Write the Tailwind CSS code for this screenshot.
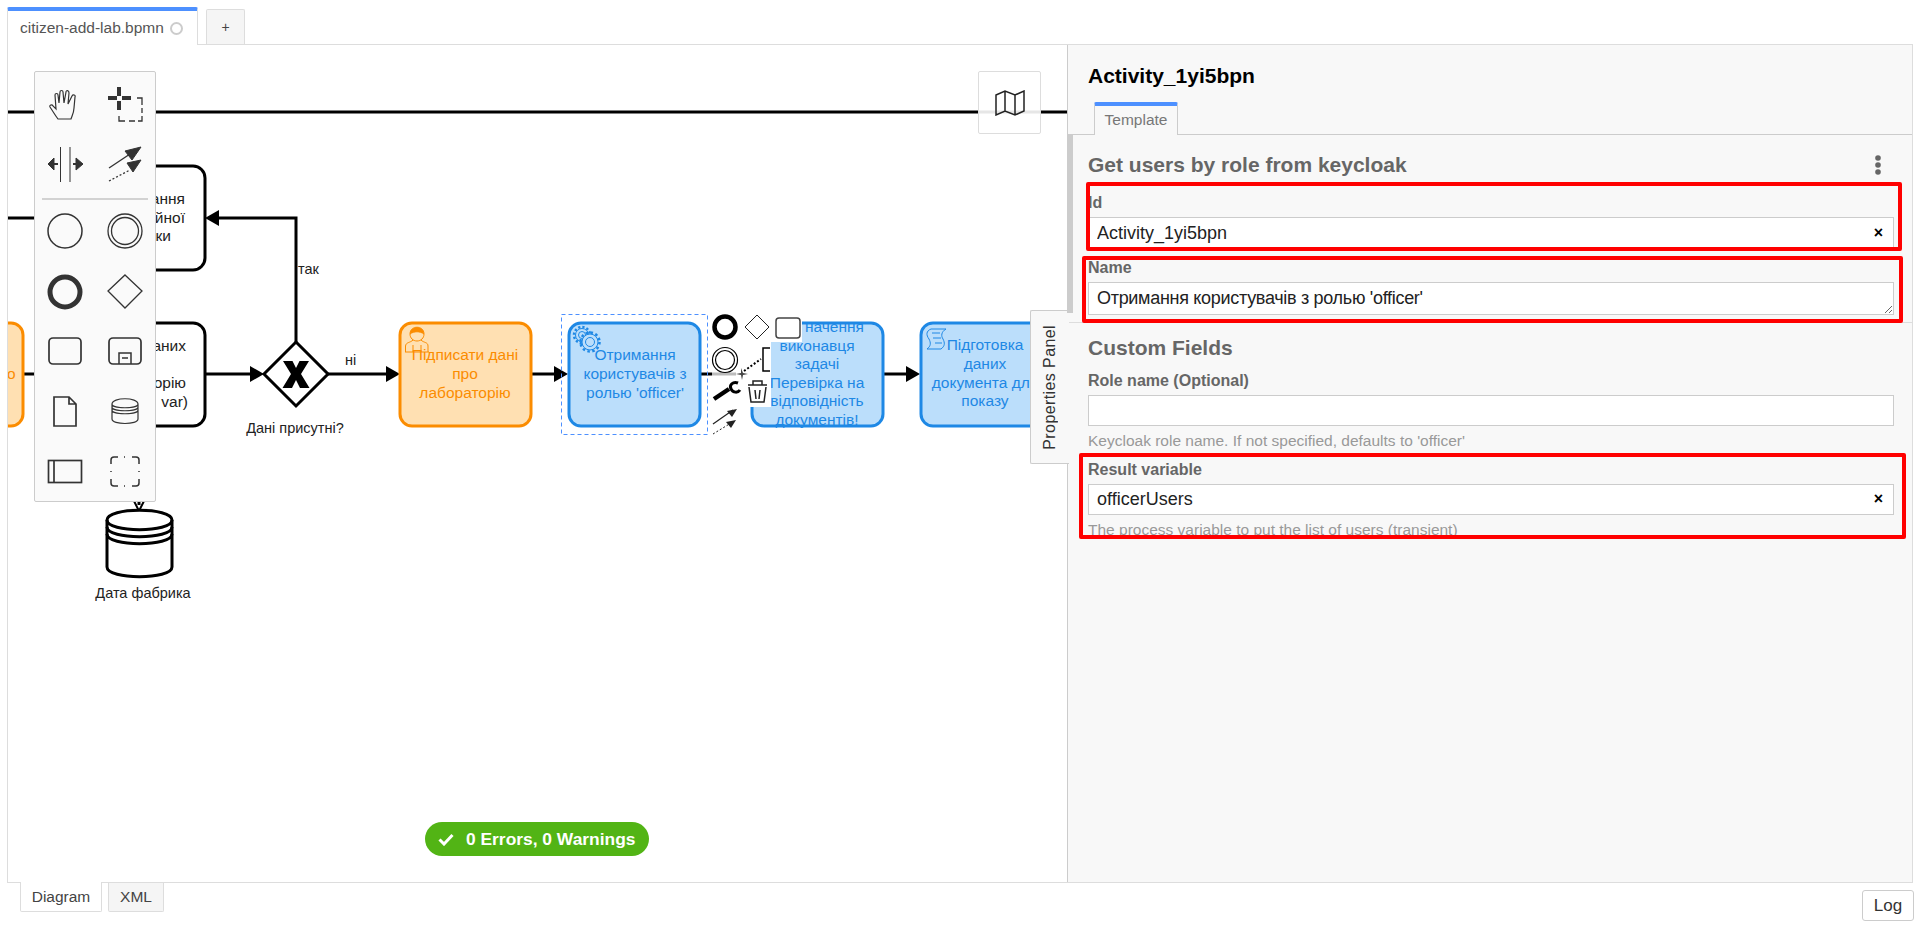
<!DOCTYPE html>
<html lang="en">
<head>
    <meta charset="UTF-8">
    <title>citizen-add-lab.bpmn</title>
    <script src="https://cdn.jsdelivr.net/npm/@tailwindcss/browser@4"></script>
</head>
<body class="h-screen flex flex-col bg-white overflow-hidden font-['Liberation_Sans',sans-serif] text-[15.5px] text-[#444]">
    <!-- File tabs -->
    <div class="h-[44px] shrink-0 flex items-end pl-[7px] gap-[8px]">
        <div class="relative z-10 -mb-px h-[38px] w-[191px] bg-white border-x border-[#ddd] border-t-4 border-t-[#4d90ff] rounded-t-[2px] flex items-center pl-[12px] gap-[6px] text-[#555]">
            <span>citizen-add-lab.bpmn</span>
            <span class="w-[13px] h-[13px] rounded-full border-2 border-[#ccc]"></span>
        </div>
        <div class="h-[35px] w-[39px] bg-[#f5f5f5] border-x border-t border-[#ddd] rounded-t-[2px] flex items-center justify-center text-[14px]">+</div>
    </div>

    <!-- Editor frame -->
    <div class="flex-1 min-h-0 ml-[7px] mr-[6px] border border-[#ddd] flex">
        <div class="relative flex-1 overflow-hidden bg-white">
            <svg class="absolute inset-0" width="1059" height="837" viewBox="8 45 1059 837" fill="none">
                <!-- Flows -->
                <g stroke="#000" stroke-width="3">
                    <path d="M8 112H1067"/>
                    <path d="M8 218H100"/>
                    <path d="M296 342V218H218"/>
                    <path d="M23 374H40"/>
                    <path d="M205 374H252"/>
                    <path d="M328 374H388"/>
                    <path d="M531 374H556"/>
                    <path d="M883 374H908"/>
                    <path d="M700 374H712"/>
                    <path d="M139 495V505"/>
                </g>
                <g fill="#000">
                    <path d="M205 218L219 210V226Z"/>
                    <path d="M264 374L250 366V382Z"/>
                    <path d="M400 374L386 366V382Z"/>
                    <path d="M568 374L554 366V382Z"/>
                    <path d="M920 374L906 366V382Z"/>
                </g>
                <path d="M134 501L139 511L144 501" stroke="#000" stroke-width="2"/>

                <!-- Tasks hidden behind the palette -->
                <rect x="70" y="166" width="135" height="104" rx="12" fill="#fff" stroke="#000" stroke-width="3"/>
                <rect x="70" y="323" width="135" height="103" rx="12" fill="#fff" stroke="#000" stroke-width="3"/>
                <g font-size="15.500" fill="#222" text-anchor="end">
                    <text x="185" y="204">ання</text>
                    <text x="185" y="223">йної</text>
                    <text x="171" y="241">ки</text>
                    <text x="186" y="351">аних</text>
                    <text x="186" y="388">орію</text>
                    <text x="188" y="407">var)</text>
                </g>
                <rect x="-40" y="323" width="63" height="103" rx="12" fill="#ffe0b2" stroke="#fb8c00" stroke-width="3"/>
                <text x="7" y="379" font-size="15.500" fill="#fb8c00">о</text>

                <!-- Gateway -->
                <path d="M296 342L328 374L296 406L264 374Z" fill="#fff" stroke="#000" stroke-width="3"/>
                <path d="M283 361H292.500L296 368L299.500 361H309L301 374L309.500 388H300L296 380L292 388H282.500L291 374Z" fill="#000"/>
                <g font-size="14.500" fill="#222">
                    <text x="295" y="433" text-anchor="middle">Дані присутні?</text>
                    <text x="298" y="274">так</text>
                    <text x="345" y="365">ні</text>
                    <text x="143" y="598" text-anchor="middle">Дата фабрика</text>
                </g>

                <!-- Data store -->
                <path d="M107 520C107 507 172 507 172 520V567C172 580 107 580 107 567Z" fill="#fff" stroke="#000" stroke-width="3"/>
                <path d="M107 520C107 533 172 533 172 520M107 527C107 540 172 540 172 527M107 534C107 547 172 547 172 534" stroke="#000" stroke-width="3"/>

                <!-- Orange user task -->
                <rect x="400" y="323" width="131" height="103" rx="12" fill="#ffe0b2" stroke="#fb8c00" stroke-width="3"/>
                <g stroke="#fb8c00" stroke-width="1">
                    <path d="M410 334C410 325 424 325 424 334C420 331 414 331 410 334Z" fill="#fb8c00"/>
                    <path d="M410 334C410 338 413 341 417 341C421 341 424 338 424 334"/>
                    <path d="M413 340C410 343 406 342 405.500 346V352M421 340C424 343 428 342 428 346V352M405 352H429M413 345V352M421 345V352"/>
                </g>
                <g font-size="15.500" fill="#fb8c00" text-anchor="middle">
                    <text x="465" y="360">Підписати дані</text>
                    <text x="465" y="379">про</text>
                    <text x="465" y="398">лабораторію</text>
                </g>

                <!-- Blue service task -->
                <rect x="569" y="323" width="131" height="103" rx="12" fill="#bbdefb" stroke="#1e88e5" stroke-width="3"/>
                <g stroke="#1e88e5">
                    <circle cx="582" cy="335" r="6.500"/>
                    <circle cx="582" cy="335" r="8" stroke-width="2.500" stroke-dasharray="2.200 2"/>
                    <circle cx="582" cy="335" r="3.500"/>
                    <circle cx="590" cy="342" r="8" fill="#bbdefb"/>
                    <circle cx="590" cy="342" r="9.500" stroke-width="2.500" stroke-dasharray="2.500 2.500"/>
                    <circle cx="590" cy="342" r="4.500"/>
                </g>
                <g font-size="15.500" fill="#1e88e5" text-anchor="middle">
                    <text x="635" y="360">Отримання</text>
                    <text x="635" y="379">користувачів з</text>
                    <text x="635" y="398">ролью 'officer'</text>
                </g>
                <rect x="561.500" y="314.500" width="146" height="120" stroke="#4d90ff" stroke-dasharray="4 3"/>

                <!-- User task behind the context pad -->
                <rect x="752" y="323" width="131" height="103" rx="12" fill="#bbdefb" stroke="#1e88e5" stroke-width="3"/>
                <g font-size="15.500" fill="#1e88e5" text-anchor="middle">
                    <text x="864" y="332" text-anchor="end">начення</text>
                    <text x="817" y="351">виконавця</text>
                    <text x="817" y="369">задачі</text>
                    <text x="817" y="388">Перевірка на</text>
                    <text x="817" y="406">відповідність</text>
                    <text x="817" y="425">документів!</text>
                </g>

                <!-- Script task -->
                <rect x="921" y="323" width="130" height="103" rx="12" fill="#bbdefb" stroke="#1e88e5" stroke-width="3"/>
                <path d="M931 329H946C941 332 941 336 943 339C945 343 945 346 941 349H927C931 346 931 343 929 339C926 335 926 331 931 329ZM932 333H940M933 338H941M935 343H942" stroke="#1e88e5"/>
                <g font-size="15.500" fill="#1e88e5" text-anchor="middle">
                    <text x="985" y="350">Підготовка</text>
                    <text x="985" y="369">даних</text>
                    <text x="985" y="388">документа для</text>
                    <text x="985" y="406">показу</text>
                </g>

                <!-- Context pad -->
                <path d="M712 316H802V342H771V407H712Z" fill="#fff"/>
                <path d="M712 374H736" stroke="#bbb" stroke-width="3"/>
                <circle cx="725" cy="327" r="10.500" stroke="#000" stroke-width="4.500"/>
                <path d="M757 315L769 327L757 339L745 327Z" stroke="#222"/>
                <rect x="776" y="318" width="24" height="20" rx="3" stroke="#444" stroke-width="1.500"/>
                <circle cx="725" cy="360" r="12.500" stroke="#000" stroke-width="1.200"/>
                <circle cx="725" cy="360" r="9.500" stroke="#000" stroke-width="1.200"/>
                <path d="M770 348H763V371H770" stroke="#000" stroke-width="1.500"/>
                <path d="M744 371L761 359" stroke="#000" stroke-width="2" stroke-dasharray="2 2"/>
                <path d="M736 374L741 375L742 380L743 375L748 374L743 373L741 368L741 373Z" fill="#444"/>
                <path d="M714 399L729 389" stroke="#000" stroke-width="4.500"/>
                <path d="M738 383C733 381 729 385 731 389C733 393 738 393 740 390" stroke="#000" stroke-width="3"/>
                <path d="M748 385H767M753 385V381H762V385M749 387L751 402H764L766 387M755 390L756 399M760 390L759 399" stroke="#222" stroke-width="1.500"/>
                <path d="M713 424L733 410" stroke="#222" stroke-width="1.200"/>
                <path d="M737 409L727 411L732 417Z" fill="#222"/>
                <path d="M713 434L731 423" stroke="#222" stroke-dasharray="2 2"/>
                <path d="M736 420L726 422L731 428Z" fill="#222"/>
            </svg>

            <!-- Tool palette -->
            <div class="absolute left-[26px] top-[26px] w-[122px] h-[431px] bg-[#fafafa] border border-[#ccc] rounded-[2px]">
                <svg width="120" height="429" viewBox="35 72 120 429" fill="none" stroke="#333">
                    <path d="M58 119C55 115 54 113 50 107C49 105 52 104 53 106L56 109L55 95C55 93 58 93 58 95L59 103L60 92C60 90 63 90 63 92L64 103L66 92C66 90 69 90 69 93L68 104L72 96C73 94 76 95 75 97L74 108C74 112 72 116 71 119Z" stroke-width="1.200"/>
                    <path d="M108 98H117M122 98H131M119 87V96M119 101V110" stroke-width="4"/>
                    <path d="M137 98H142V105M142 108V113M142 116V121H138M135 121H129M125 121H119V116" stroke-width="1.300"/>
                    <path d="M60.500 147V182M70 147V182"/>
                    <path d="M48 164L54 158V170ZM83 164L76 158V170Z" fill="#333"/>
                    <path d="M54 164H58M73 164H78" stroke-width="2"/>
                    <path d="M109 168L130 154" stroke-width="1.300"/>
                    <path d="M141 147L125 151L132 160Z" fill="#333"/>
                    <path d="M109 181L130 170" stroke-dasharray="2 2" stroke-width="1.300"/>
                    <path d="M141 160L127 163L133 172Z" fill="#333"/>
                    <path d="M42 199H148" stroke="#aaa"/>
                    <circle cx="65" cy="231" r="17" stroke-width="1.500"/>
                    <circle cx="125" cy="231" r="17" stroke-width="1.300"/>
                    <circle cx="125" cy="231" r="13.500" stroke-width="1.300"/>
                    <circle cx="65" cy="292" r="15" stroke-width="5"/>
                    <path d="M125 275L142 291L125 308L108 291Z" stroke-width="1.300"/>
                    <rect x="49" y="338" width="32" height="26" rx="4" stroke-width="1.700"/>
                    <rect x="109" y="338" width="32" height="26" rx="4" stroke-width="1.700"/>
                    <path d="M119 364V353H131V364M122 358H128" stroke-width="1.500"/>
                    <path d="M54 397H69L76 404V426H54ZM69 397V404H76" stroke-width="1.700"/>
                    <path d="M112 404C112 397 138 397 138 404V419C138 425 112 425 112 419ZM112 404C112 409 138 409 138 404M112 407C112 412 138 412 138 407M112 410C112 415 138 415 138 410" stroke-width="1.200"/>
                    <rect x="48.500" y="460.500" width="33" height="22" stroke-width="1.700"/>
                    <path d="M54 460V483" stroke-width="1.700"/>
                    <path d="M118 457H114C112 457 111 458 111 460V464M124 457H125M132 457H136C138 457 139 458 139 460V464M111 471V472M139 471V472M111 479V483C111 485 112 486 114 486H118M124 486H125M132 486H136C138 486 139 485 139 483V479" stroke-width="1.500"/>
                </svg>
            </div>

            <!-- Minimap toggle -->
            <div class="absolute left-[970px] top-[26px] w-[63px] h-[63px] bg-white/90 border border-[#ddd] rounded-[2px] flex items-center justify-center">
                <svg width="30" height="26" viewBox="0 0 30 26" fill="none" stroke="#222" stroke-width="1.500">
                    <path d="M1 5L10 1L20 5L29 1V21L20 25L10 21L1 25ZM10 1V21M20 5V25"/>
                </svg>
            </div>

            <!-- Validation badge -->
            <div class="absolute left-[417px] top-[777px] w-[224px] h-[34px] rounded-full bg-[#52b415] text-white font-bold text-[17.4px] flex items-center pl-[13px] gap-[12px]">
                <svg width="16" height="13" viewBox="0 0 16 13" fill="none" stroke="#fff" stroke-width="3"><path d="M1.500 6.500L6 11L14.500 2"/></svg>
                <span>0 Errors, 0 Warnings</span>
            </div>
        </div>

        <!-- Properties panel -->
        <div class="relative z-10 w-[845px] shrink-0 bg-[#f8f8f8] border-l border-[#ccc]">
            <div class="absolute left-[-38px] top-[265px] w-[39px] h-[154px] bg-[#f8f8f8] border border-[#ccc] border-r-0 rounded-l-[2px] flex items-center justify-center">
                <span class="[writing-mode:vertical-rl] rotate-180 text-[16px] tracking-[0.4px] text-[#333]">Properties Panel</span>
            </div>

            <div class="h-[90px] border-b border-[#ccc] relative">
                <div class="absolute left-[20px] top-[15px] text-[21px] font-bold text-black">Activity_1yi5bpn</div>
                <div class="absolute left-[26px] bottom-[-1px] w-[84px] h-[33px] pb-[2px] bg-[#f8f8f8] border-x border-[#ccc] border-t-4 border-t-[#4d90ff] rounded-t-[2px] flex items-center justify-center text-[#777]">Template</div>
            </div>

            <div class="relative pl-[20px] pr-[18px]">
                <div class="absolute left-[-1px] top-0 w-[6px] h-[178px] bg-[#ccc]"></div>

                <div class="h-[60px] flex items-center justify-between text-[21px] font-bold text-[#666]">
                    <span>Get users by role from keycloak</span>
                    <svg class="mr-[13px]" width="6" height="20" viewBox="0 0 6 20" fill="#666"><circle cx="3" cy="3" r="2.800"/><circle cx="3" cy="10" r="2.800"/><circle cx="3" cy="17" r="2.800"/></svg>
                </div>

                <label class="block text-[16px] leading-[16px] font-bold text-[#666]">Id</label>
                <div class="relative mt-[6px]">
                    <input class="block w-full h-[33px] bg-white border border-[#ccc] pl-[8px] text-[18px] text-[#222]" value="Activity_1yi5bpn">
                    <span class="absolute right-[11px] top-[6px] text-[16px] font-bold text-black leading-[20px]">×</span>
                </div>

                <label class="block text-[16px] leading-[16px] font-bold text-[#666] mt-[10px]">Name</label>
                <textarea class="block w-full h-[33px] mt-[6px] bg-white border border-[#ccc] pl-[8px] pt-[4px] text-[18px] tracking-[-0.3px] leading-[22px] text-[#222]">Отримання користувачів з ролью 'officer'</textarea>
            </div>

            <div class="h-[8px] border-b border-[#ddd]"></div>

            <div class="pl-[20px] pr-[18px]">
                <div class="text-[21px] leading-[20px] font-bold text-[#666] mt-[15px]">Custom Fields</div>
                <label class="block text-[16px] leading-[16px] font-bold text-[#666] mt-[15px]">Role name (Optional)</label>
                <input class="block w-full h-[31px] mt-[6px] bg-white border border-[#ccc]">
                <div class="leading-[16px] text-[#999] mt-[7px]">Keycloak role name. If not specified, defaults to 'officer'</div>

                <label class="block text-[16px] leading-[16px] font-bold text-[#666] mt-[13px]">Result variable</label>
                <div class="relative mt-[6px]">
                    <input class="block w-full h-[31px] bg-white border border-[#ccc] pl-[8px] text-[18px] text-[#222]" value="officerUsers">
                    <span class="absolute right-[11px] top-[5px] text-[16px] font-bold text-black leading-[20px]">×</span>
                </div>
                <div class="leading-[16px] text-[#999] mt-[7px]">The process variable to put the list of users (transient)</div>
            </div>

            <!-- Review highlights drawn over the panel -->
            <div class="absolute left-[18px] top-[137px] w-[816px] h-[69px] border-4 border-[#f00] rounded-[2px]"></div>
            <div class="absolute left-[14px] top-[211px] w-[821px] h-[67px] border-4 border-[#f00] rounded-[2px]"></div>
            <div class="absolute left-[11px] top-[408px] w-[827px] h-[86px] border-4 border-[#f00] rounded-[2px]"></div>
        </div>
    </div>

    <!-- View switcher and log -->
    <div class="h-[42px] shrink-0 flex items-start pl-[20px] pr-[5px]">
        <div class="relative z-10 -mt-px h-[30px] w-[82px] bg-white border-x border-b border-[#ddd] rounded-b-[2px] flex items-center justify-center">Diagram</div>
        <div class="ml-[6px] h-[29px] w-[56px] bg-[#f5f5f5] border-x border-b border-[#ddd] rounded-b-[2px] flex items-center justify-center">XML</div>
        <div class="ml-auto mt-[7px] h-[31px] w-[52px] bg-white border border-[#ccc] rounded-[3px] flex items-center justify-center text-[17px] text-[#333]">Log</div>
    </div>
</body>
</html>
